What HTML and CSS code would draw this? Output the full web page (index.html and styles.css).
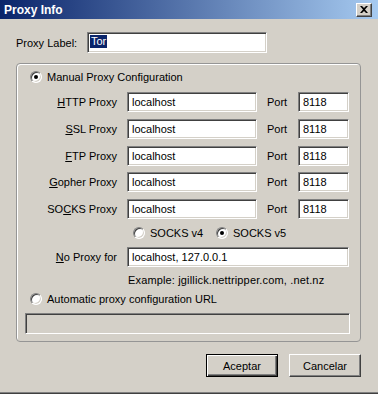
FILE: index.html
```html
<!doctype html>
<html lang="en">
  <head>
    <meta charset="UTF-8" />
    <meta name="viewport" content="width=device-width, initial-scale=1.0" />
    <title>Proxy Info</title>
    <link rel="stylesheet" href="styles.css">
  </head>
  <body>
    <div class="window">
      <div class="titlebar">
        <span class="title">Proxy Info</span>
        <button type="button" class="close" aria-label="Close">
          <svg width="8" height="7" viewBox="0 0 8 7">
            <path d="M0 0h2l2 2 2-2h2L5 3.5 8 7H6L4 5 2 7H0l3-3.5z" fill="#000" />
          </svg>
        </button>
      </div>

      <div class="dialog">
        <div class="label-row">
          <label class="label-name">Proxy Label:</label>
          <div class="field field-label"><span class="selected">Tor</span></div>
        </div>

        <div class="group">
          <div class="option">
            <span class="radio checked"></span>
            Manual Proxy Configuration
          </div>

          <div class="proxy-grid">
            <label class="row-label"><u>H</u>TTP Proxy</label>
            <div class="field">localhost</div>
            <span class="port-label">Port</span>
            <div class="field">8118</div>

            <label class="row-label"><u>S</u>SL Proxy</label>
            <div class="field">localhost</div>
            <span class="port-label">Port</span>
            <div class="field">8118</div>

            <label class="row-label"><u>F</u>TP Proxy</label>
            <div class="field">localhost</div>
            <span class="port-label">Port</span>
            <div class="field">8118</div>

            <label class="row-label"><u>G</u>opher Proxy</label>
            <div class="field">localhost</div>
            <span class="port-label">Port</span>
            <div class="field">8118</div>

            <label class="row-label">SO<u>C</u>KS Proxy</label>
            <div class="field">localhost</div>
            <span class="port-label">Port</span>
            <div class="field">8118</div>

            <div class="socks-versions">
              <div class="option socks-v4">
                <span class="radio"></span>
                SOCKS v4
              </div>
              <div class="option">
                <span class="radio checked"></span>
                SOCKS v5
              </div>
            </div>

            <label class="row-label"><u>N</u>o Proxy for</label>
            <div class="field field-span">localhost, 127.0.0.1</div>

            <div class="hint">Example: jgillick.nettripper.com, .net.nz</div>
          </div>

          <div class="option option-auto">
            <span class="radio"></span>
            Automatic proxy configuration URL
          </div>
          <div class="field field-url"></div>
        </div>

        <div class="buttons">
          <button type="button" class="btn btn-default">Aceptar</button>
          <button type="button" class="btn">Cancelar</button>
        </div>
      </div>
    </div>
  </body>
</html>
```

FILE: styles.css
```css
* {
  margin: 0;
  padding: 0;
  box-sizing: border-box;
}

body {
  font-family: "Liberation Sans", Arial, sans-serif;
  font-size: 11px;
  color: #000;
  background: #d4d0c8;
}

.window {
  width: 378px;
  height: 394px;
  background: #d4d0c8;
  box-shadow: inset 0 -1px 0 #404040, inset 0 -2px 0 #808080;
  overflow: hidden;
}

/* title bar */
.titlebar {
  height: 19px;
  display: flex;
  align-items: center;
  justify-content: space-between;
  padding-left: 4px;
  padding-right: 6px;
  background: linear-gradient(to right, #0a246a 0%, #a6caf0 100%);
}

.title {
  color: #fff;
  font-weight: bold;
  font-size: 12px;
}

.close {
  width: 16px;
  height: 14px;
  display: flex;
  align-items: center;
  justify-content: center;
  background: #d4d0c8;
  border: 1px solid;
  border-color: #fff #404040 #404040 #fff;
  box-shadow: inset -1px -1px 0 #808080;
}

/* content */
.dialog {
  padding-top: 13px;
}

.label-row {
  display: flex;
  align-items: center;
  padding-left: 16px;
}

.label-name {
  width: 71px;
}

.field {
  height: 20px;
  line-height: 18px;
  padding-left: 4px;
  background: #fff;
  border: 1px solid;
  border-color: #808080 #fff #fff #808080;
  box-shadow: inset 1px 1px 0 #404040, inset -1px -1px 0 #d4d0c8;
  white-space: nowrap;
  overflow: hidden;
}

.field-label {
  width: 180px;
  height: 21px;
  padding-left: 2px;
  padding-top: 2px;
  line-height: 13px;
}

.selected {
  display: inline-block;
  background: #0a246a;
  color: #fff;
  padding: 0 1px;
}

.group {
  margin: 10px 0 0 16px;
  width: 345px;
  border: 1px solid #959595;
  border-radius: 4px;
  box-shadow: inset 1px 1px 0 #fff;
  padding-bottom: 7px;
}

.option {
  display: flex;
  align-items: center;
  gap: 5px;
  height: 14px;
  white-space: nowrap;
}

.group > .option {
  margin: 6px 0 0 13px;
}

.group > .option-auto {
  margin-top: 5px;
}

.radio {
  width: 12px;
  height: 12px;
  border-radius: 50%;
  background: #fff;
  border: 1px solid;
  border-color: #808080 #fff #fff #808080;
  box-shadow: inset 1px 1px 0 #404040, inset -1px -1px 0 #d4d0c8;
  display: flex;
  align-items: center;
  justify-content: center;
  flex-shrink: 0;
}

.radio.checked::after {
  content: "";
  width: 4px;
  height: 4px;
  border-radius: 50%;
  background: #000;
}

.proxy-grid {
  display: grid;
  grid-template-columns: 100px 130px 21px 51px;
  grid-template-rows: 20px 20px 20px 20px 20px 14px 20px 14px;
  column-gap: 10px;
  row-gap: 6.75px;
  margin-top: 8px;
}

.row-label {
  text-align: right;
  line-height: 20px;
  white-space: nowrap;
}

.port-label {
  line-height: 20px;
}

.socks-versions {
  grid-column: 2 / -1;
  display: flex;
  padding-left: 6px;
}

.socks-v4 {
  width: 83px;
}

.field-span {
  grid-column: 2 / -1;
}

.hint {
  grid-column: 2 / -1;
  padding-left: 1px;
  line-height: 14px;
  white-space: nowrap;
  letter-spacing: 0.15px;
}

.field-url {
  width: 325px;
  height: 21px;
  margin: 7px 0 0 8px;
  background: #d4d0c8;
}

/* buttons */
.buttons {
  display: flex;
  justify-content: flex-end;
  gap: 11px;
  padding-right: 17px;
  margin-top: 12px;
}

.btn {
  width: 72px;
  height: 23px;
  font-family: inherit;
  font-size: 11px;
  color: #000;
  background: #d4d0c8;
  border: 1px solid;
  border-color: #fff #404040 #404040 #fff;
  box-shadow: inset -1px -1px 0 #808080;
}

.btn-default {
  border: 1px solid #000;
  box-shadow: inset 1px 1px 0 #fff, inset -1px -1px 0 #404040, inset -2px -2px 0 #808080;
}
```
